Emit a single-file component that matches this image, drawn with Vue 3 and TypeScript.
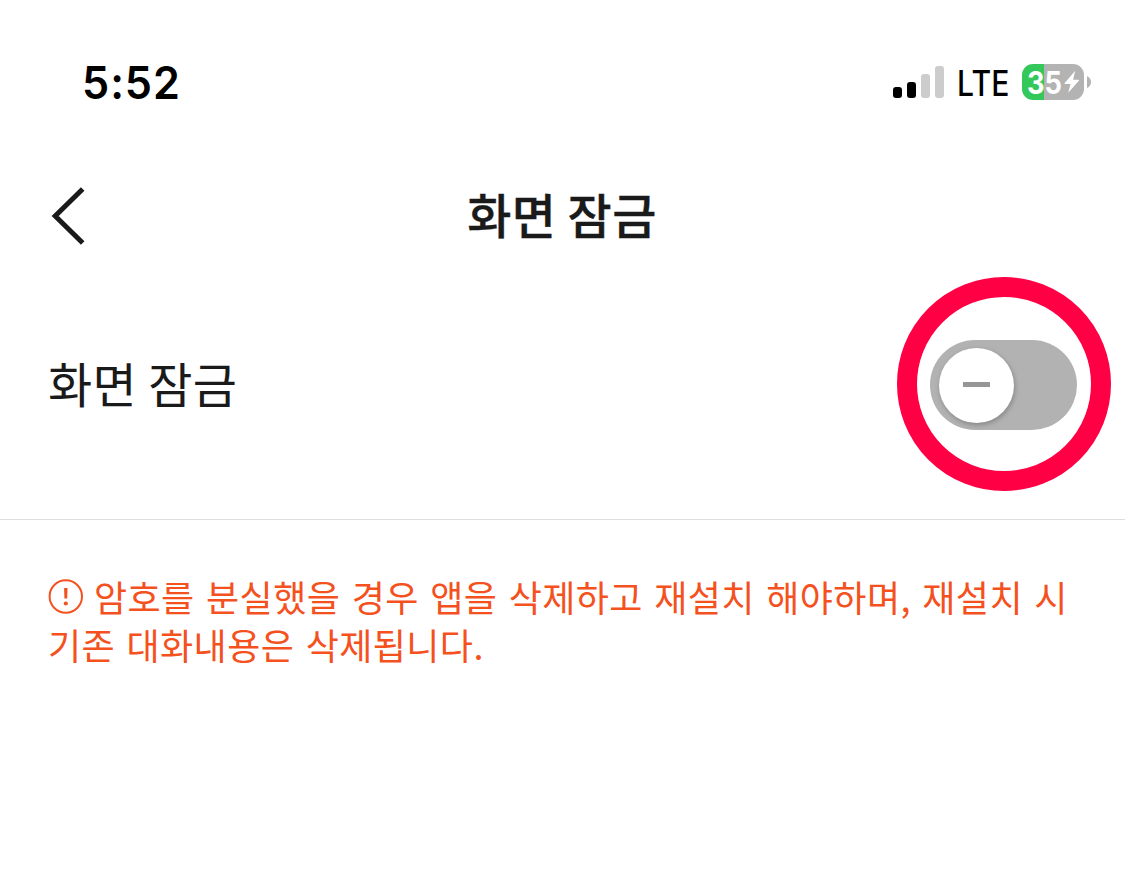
<script setup lang="ts">
import { ref } from 'vue'

const time = '5:52'
const battery = 35
const locked = ref(false)
const noticeLines: string[] = [
  '암호를 분실했을 경우 앱을 삭제하고 재설치 해야하며, 재설치 시',
  '기존 대화내용은 삭제됩니다.',
]
const bars = [
  { height: 11, active: true },
  { height: 16, active: true },
  { height: 24, active: false },
  { height: 32, active: false },
]
</script>

<template>
  <main class="screen">
    <div class="status">
      <span class="time">{{ time }}</span>
      <div class="indicators">
        <div class="signal">
          <i
            v-for="(bar, i) in bars"
            :key="i"
            class="bar"
            :class="{ active: bar.active }"
            :style="{ height: bar.height + 'px' }"
          />
        </div>
        <span class="network">LTE</span>
        <div class="battery">
          <span class="level">{{ battery }}</span>
          <svg class="bolt" width="16" height="24" viewBox="0 0 16 24">
            <path d="M11.2 .8 .7 12.9q-.7 1 .5 1h5.3L4.2 22.8 14.9 10.8q.7-1-.5-1H9.1Z" fill="#fff" />
          </svg>
        </div>
        <svg class="cap" width="4" height="12" viewBox="0 0 4 12">
          <path d="M0 0Q4 2 4 6T0 12Z" fill="#b3b3b3" />
        </svg>
      </div>
    </div>

    <header class="header">
      <svg class="back" width="34" height="60" viewBox="0 0 34 60">
        <path d="M31.7 3 4.2 30 31.7 57" fill="none" stroke="#1a1a1a" stroke-width="5" />
      </svg>
      <h1 class="title">화면 잠금</h1>
    </header>

    <section class="setting">
      <span class="label">화면 잠금</span>
      <div class="highlight">
        <button class="toggle" type="button" role="switch" :aria-checked="locked" @click="locked = !locked">
          <span class="knob"><i class="dash" /></span>
        </button>
      </div>
    </section>

    <section class="notice">
      <div class="line">
        <svg class="alert" width="35" height="35" viewBox="0 0 35 35">
          <circle cx="17.8" cy="17.5" r="16.2" fill="none" stroke="#f4511e" stroke-width="2" />
          <path d="M16.1 9h3.4l-.3 10.5h-2.8Z" fill="#f4511e" />
          <circle cx="17.8" cy="24.5" r="2.1" fill="#f4511e" />
        </svg>
        <span class="first">{{ noticeLines[0] }}</span>
      </div>
      <div class="line">{{ noticeLines[1] }}</div>
    </section>
  </main>
</template>

<style>
body {
  background: #fff;
}
</style>

<style scoped>
.screen {
  box-sizing: border-box;
  width: 1125px;
  height: 877px;
  overflow: hidden;
  background: #fff;
  color: #1a1a1a;
  font-family: 'Noto Sans CJK KR', sans-serif;
}
.status {
  box-sizing: border-box;
  height: 164px;
  padding: 52px 34px 0 82px;
  display: flex;
  justify-content: space-between;
  align-items: flex-start;
  color: #000;
  font-family: Inter, sans-serif;
}
.time {
  font-size: 45px;
  line-height: 61px;
  font-weight: 600;
  letter-spacing: 1px;
  transform: scaleX(0.96);
  transform-origin: left;
}
.indicators {
  display: flex;
  align-items: center;
  height: 60px;
}
.signal {
  display: flex;
  align-items: flex-end;
  gap: 5px;
  height: 32px;
}
.bar {
  width: 9px;
  border-radius: 3px;
  background: #ccc;
}
.bar.active {
  background: #000;
}
.network {
  margin-left: 13px;
  width: 52px;
  font-size: 35px;
  line-height: 60px;
  padding-top: 2px;
  font-weight: 500;
  letter-spacing: 0.3px;
  white-space: nowrap;
  transform: scaleX(0.86);
  transform-origin: left;
}
.battery {
  box-sizing: border-box;
  margin-left: 13px;
  width: 62px;
  height: 36px;
  padding-left: 5px;
  border-radius: 11px;
  display: flex;
  align-items: center;
  background: linear-gradient(90deg, #34c759 22px, #b3b3b3 22px);
}
.level {
  width: 37px;
  padding-top: 1px;
  color: #fff;
  font-size: 31px;
  line-height: 36px;
  font-weight: 700;
  transform: scaleX(0.88);
  transform-origin: left;
}
.bolt {
  flex: none;
}
.cap {
  margin-left: 3px;
}
.header {
  height: 104px;
  padding: 0 51px;
  display: grid;
  grid-template-columns: 34px 1fr 34px;
  align-items: center;
}
.title {
  margin: 0;
  padding-bottom: 6px;
  text-align: center;
  font-size: 48px;
  line-height: 72px;
  font-weight: 500;
  letter-spacing: 0.4px;
  text-indent: -1px;
  -webkit-text-stroke: 0.35px #1a1a1a;
}
.setting {
  box-sizing: border-box;
  height: 252px;
  padding: 9px 14px 0 48px;
  display: flex;
  justify-content: space-between;
  align-items: flex-start;
  border-bottom: 1px solid #dedede;
}
.label {
  margin-top: 69px;
  font-size: 48px;
  line-height: 72px;
  letter-spacing: 0.4px;
}
.highlight {
  box-sizing: border-box;
  width: 214px;
  height: 214px;
  padding: 43px 0 0 13px;
  border: 20px solid #ff0044;
  border-radius: 50%;
}
.toggle {
  box-sizing: border-box;
  width: 147px;
  height: 90px;
  padding: 0 9px;
  border: 0;
  border-radius: 45px;
  display: flex;
  align-items: center;
  background: #b2b2b2;
}
.knob {
  width: 75px;
  height: 75px;
  border-radius: 50%;
  display: flex;
  align-items: center;
  justify-content: center;
  background: #fff;
  box-shadow: 1px 2px 5px rgba(0, 0, 0, 0.25);
}
.dash {
  width: 27px;
  height: 5px;
  margin-bottom: 1px;
  background: #969696;
}
.notice {
  padding: 52px 48px 0;
  color: #f4511e;
  font-size: 36px;
  line-height: 48px;
  letter-spacing: 0.43px;
  word-spacing: 2.9px;
}
.line {
  display: flex;
  align-items: center;
  height: 48px;
  white-space: nowrap;
}
.alert {
  flex: none;
  margin-right: 11px;
}
</style>
